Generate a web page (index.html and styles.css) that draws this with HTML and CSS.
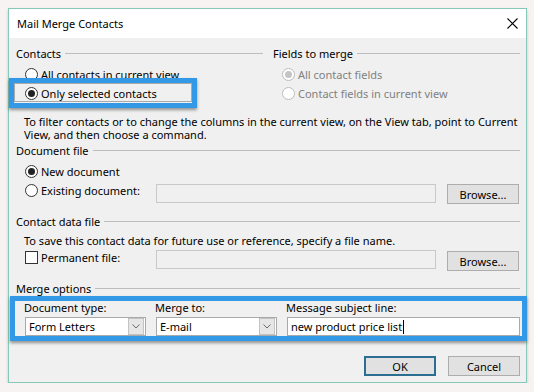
FILE: index.html
```html
<!DOCTYPE html>
<html lang="en">
<head>
  <meta charset="UTF-8" />
  <title>Mail Merge Contacts</title>
  <link rel="stylesheet" href="styles.css">
</head>
<body>
  <div class="dialog">
    <div class="titlebar">
      <span class="title">Mail Merge Contacts</span>
      <svg class="close" width="11" height="11" viewBox="0 0 11 11">
        <path d="M0.5 0.5L10.5 10.5M10.5 0.5L0.5 10.5" stroke="#000" stroke-width="1.1" fill="none"/>
      </svg>
    </div>

    <div class="content">
      <!-- Contacts / Fields to merge -->
      <div class="top">
        <div class="group">
          <div class="legend">Contacts</div>
          <div class="opt first"><span class="radio"></span>All contacts in current view</div>
          <div class="opt pick"><span class="radio on"></span>Only selected contacts</div>
        </div>
        <div class="group">
          <div class="legend">Fields to merge</div>
          <div class="opt first off"><span class="radio on"></span>All contact fields</div>
          <div class="opt off"><span class="radio"></span>Contact fields in current view</div>
        </div>
      </div>
      <p class="note first-note">To filter contacts or to change the columns in the current view, on the View tab, point to Current<br>View, and then choose a command.</p>

      <!-- Document file -->
      <div class="legend doc">Document file</div>
      <div class="opt first"><span class="radio on"></span>New document</div>
      <div class="file-row">
        <div class="opt label"><span class="radio"></span>Existing document:</div>
        <div class="field"></div>
        <button class="btn">Browse...</button>
      </div>

      <!-- Contact data file -->
      <div class="legend sect">Contact data file</div>
      <p class="note save-note">To save this contact data for future use or reference, specify a file name.</p>
      <div class="file-row perm">
        <div class="opt label"><span class="check"></span>Permanent file:</div>
        <div class="field"></div>
        <button class="btn">Browse...</button>
      </div>

      <!-- Merge options -->
      <div class="legend sect">Merge options</div>
      <div class="merge">
        <div class="col">
          <div class="cap">Document type:</div>
          <div class="combo"><span>Form Letters</span><span class="arrow"><svg width="8" height="5" viewBox="0 0 8 5"><path d="M0.5 0.5L4 4L7.5 0.5" stroke="#6b6b6b" fill="none"/></svg></span></div>
        </div>
        <div class="col">
          <div class="cap">Merge to:</div>
          <div class="combo"><span>E-mail</span><span class="arrow"><svg width="8" height="5" viewBox="0 0 8 5"><path d="M0.5 0.5L4 4L7.5 0.5" stroke="#6b6b6b" fill="none"/></svg></span></div>
        </div>
        <div class="col">
          <div class="cap">Message subject line:</div>
          <div class="text">new product price list<span class="caret"></span></div>
        </div>
      </div>

      <div class="actions">
        <button class="btn default">OK</button>
        <button class="btn">Cancel</button>
      </div>
    </div>
  </div>
</body>
</html>
```

FILE: styles.css
```css
*, *::before, *::after { box-sizing: border-box; }
body {
  margin: 0;
  background: #f8f3f3;
  font-family: "Noto Sans", sans-serif;
  font-size: 11px;
  color: #000;
}

.dialog {
  margin: 8px 0 0 8px;
  width: 519px;
  height: 375px;
  border: 1px solid #86c9b9;
  background: #f0f0f0;
  box-shadow: 0 2px 3px rgba(0, 0, 0, .18);
}

.titlebar {
  height: 29px;
  background: #fff;
  display: flex;
  align-items: center;
  justify-content: space-between;
  padding: 0 8px;
}

.content {
  padding: 7px 6px 0 7px;
}

.legend {
  display: flex;
  align-items: center;
  height: 16px;
}

.legend::after {
  content: '';
  flex: 1;
  border-top: 1px solid #bdbdbd;
  margin-left: 4px;
}

.top {
  display: grid;
  grid-template-columns: 1fr 1fr;
  column-gap: 10px;
}

.opt {
  display: flex;
  align-items: center;
  height: 19px;
  padding-left: 9px;
}

.opt.first { margin-top: 4px; }

.radio {
  width: 13px;
  height: 13px;
  border: 1px solid #333;
  border-radius: 50%;
  background: #fff;
  margin-right: 3px;
  display: flex;
  align-items: center;
  justify-content: center;
}

.radio.on::after {
  content: '';
  width: 7px;
  height: 7px;
  border-radius: 50%;
  background: #222;
}

.off { color: #808080; }
.off .radio { border-color: #bcbcbc; }
.off .radio.on::after { background: #c4c4c4; }

.check {
  width: 13px;
  height: 13px;
  border: 1px solid #333;
  background: #fff;
  margin-right: 3px;
}

.pick { position: relative; }

.pick::before {
  content: '';
  position: absolute;
  left: -2px;
  top: -1px;
  width: 178px;
  height: 19px;
  border: 1px solid #a9a9a9;
}

.pick::after {
  content: '';
  position: absolute;
  left: -7px;
  top: -6px;
  width: 188px;
  height: 30px;
  border: 5px solid #3399e6;
  box-shadow: 0 2px 3px rgba(0, 0, 0, .4);
}

.note {
  margin: 0;
  padding-left: 8px;
  line-height: 13px;
  white-space: nowrap;
}

.first-note { margin-top: 12px; }
.doc { margin-top: 1px; }
.sect { margin-top: 9px; }
.save-note { margin-top: 5px; }

.file-row {
  display: flex;
  align-items: flex-start;
}

.file-row .label {
  width: 140px;
}

.field {
  width: 280px;
  height: 19px;
  margin-top: 3px;
  border: 1px solid #c8c8c8;
  background: #f0f0f0;
}

.file-row .btn {
  margin-left: 11px;
  margin-top: 3px;
}

.perm { margin-top: 1px; }
.perm .field { margin-top: 2px; }

.btn {
  width: 72px;
  height: 20px;
  padding: 0;
  background: #e1e1e1;
  border: 1px solid #adadad;
  font: inherit;
  color: #000;
}

.btn.default { border: 2px solid #2c6d92; }

.merge {
  position: relative;
  display: grid;
  grid-template-columns: 121px 121px 1fr;
  column-gap: 10px;
  padding-left: 9px;
  margin-top: 5px;
}

.merge::after {
  content: '';
  position: absolute;
  left: -6px;
  top: -5px;
  right: -7px;
  bottom: -5px;
  border: 5px solid #3399e6;
  box-shadow: 0 2px 3px rgba(0, 0, 0, .4);
}

.cap {
  height: 14px;
  line-height: 14px;
  margin-left: -1px;
}

.combo, .text {
  height: 19px;
  margin-top: 2px;
  background: #fff;
  border: 1px solid #a9a9a9;
  display: flex;
  align-items: center;
  padding-left: 3px;
}

.combo { justify-content: space-between; }

.combo .arrow {
  width: 16px;
  height: 17px;
  margin-right: 1px;
  background: #e6e6e6;
  border: 1px solid #c3c3c3;
  display: flex;
  align-items: center;
  justify-content: center;
}

.caret {
  width: 1px;
  height: 14px;
  background: #000;
  margin-left: 1px;
}

.actions {
  display: flex;
  justify-content: flex-end;
  gap: 12px;
  margin-top: 20px;
}
```
